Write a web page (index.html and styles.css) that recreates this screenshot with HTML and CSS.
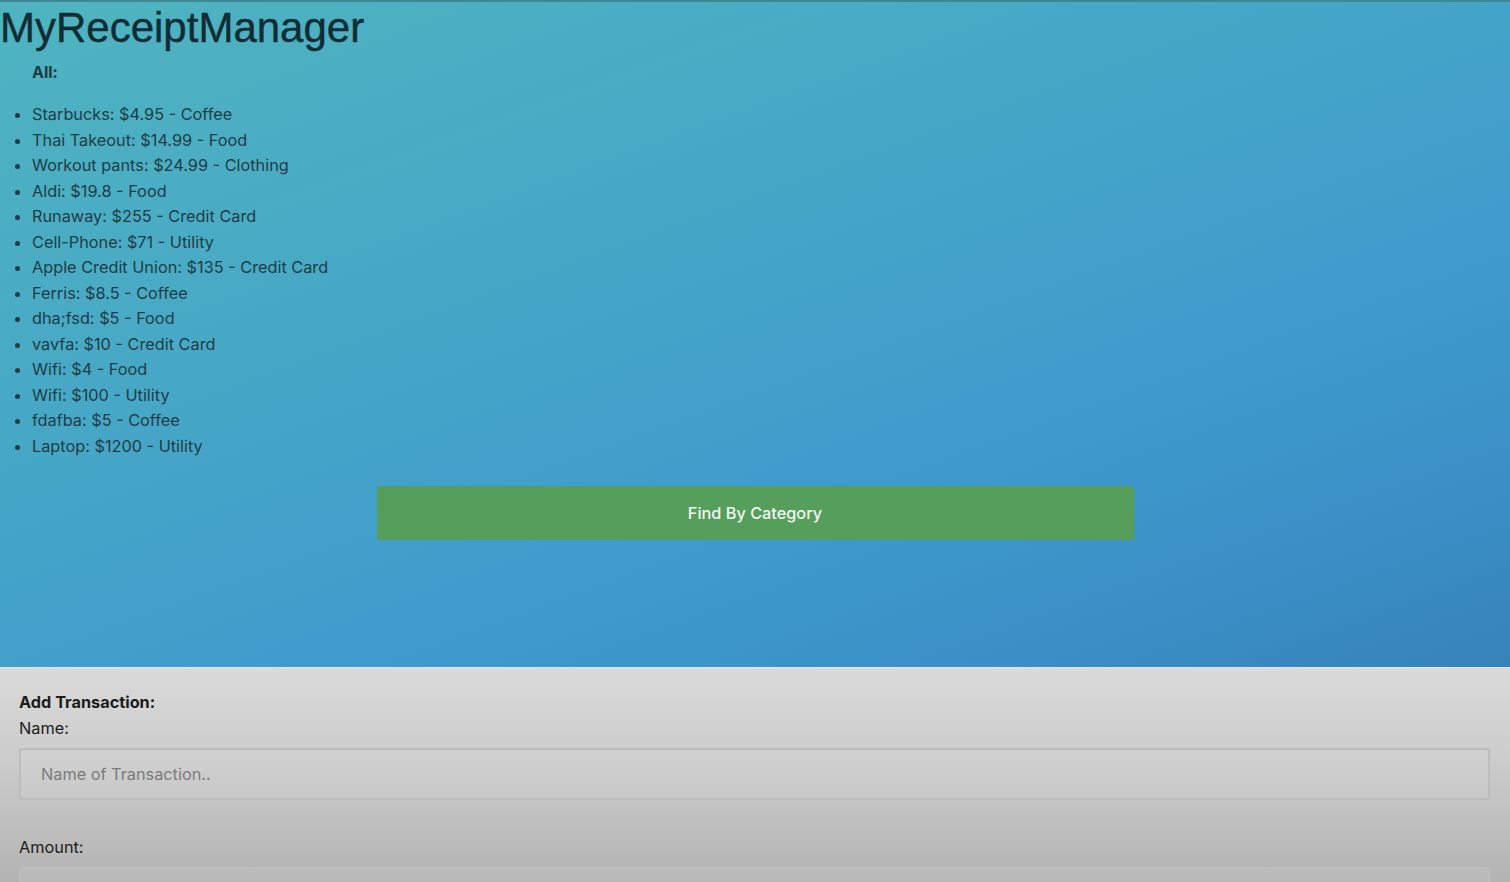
FILE: index.html
```html
<!DOCTYPE html>
<html>
<head>
<meta charset="utf-8">
<link rel="stylesheet" href="styles.css">
</head>
<body>
<div class="top">
  <h1 class="title">MyReceiptManager</h1>
  <div class="all">All:</div>
  <ul class="list">
    <li>Starbucks: $4.95 - Coffee</li>
    <li>Thai Takeout: $14.99 - Food</li>
    <li>Workout pants: $24.99 - Clothing</li>
    <li>Aldi: $19.8 - Food</li>
    <li>Runaway: $255 - Credit Card</li>
    <li>Cell-Phone: $71 - Utility</li>
    <li>Apple Credit Union: $135 - Credit Card</li>
    <li>Ferris: $8.5 - Coffee</li>
    <li>dha;fsd: $5 - Food</li>
    <li>vavfa: $10 - Credit Card</li>
    <li>Wifi: $4 - Food</li>
    <li>Wifi: $100 - Utility</li>
    <li>fdafba: $5 - Coffee</li>
    <li>Laptop: $1200 - Utility</li>
  </ul>
  <div class="btn-row">
    <button class="find-btn">Find By Category</button>
  </div>
</div>
<div class="add">
  <div class="add-title">Add Transaction:</div>
  <label class="lbl">Name:</label>
  <input class="field" type="text" placeholder="Name of Transaction..">
  <label class="lbl amount">Amount:</label>
  <input class="field" type="text">
</div>
</body>
</html>
```
FILE: styles.css
```css
html, body {
  margin: 0;
  padding: 0;
  height: 100%;
}
body {
  font-family: Inter, "Liberation Sans", sans-serif;
  color: #1f3a40;
  overflow: hidden;
  background: #b3b3b3;
}
.top {
  height: 667px;
  box-sizing: border-box;
  border-top: 2px solid #3f8592;
  background: linear-gradient(160deg, #4fb4c0 0%, #47a8c6 35%, #3f9bcd 65%, #3a8fc6 85%, #3683b8 100%);
  display: flex;
  flex-direction: column;
}
.top > * {
  flex-shrink: 0;
}
.title {
  margin: 2px 0 0 0;
  font-family: "Liberation Sans", Arial, sans-serif;
  font-weight: 400;
  font-size: 42px;
  line-height: 48px;
  color: #112c33;
  -webkit-text-stroke: 0.4px #112c33;
}
.all {
  margin: 8px 0 0 32px;
  font-weight: 700;
  font-size: 16px;
  line-height: 24px;
  color: #1f3a40;
}
.list {
  margin: 18px 0 0 0;
  padding-left: 32px;
  font-size: 16.3px;
  line-height: 25.5px;
  color: #1f3d45;
}
.btn-row {
  display: flex;
  justify-content: center;
  margin-top: 27px;
}
.find-btn {
  width: 757px;
  height: 54px;
  border: none;
  border-radius: 3px;
  background: #559e5c;
  color: #f4f7f2;
  font-family: Inter, "Liberation Sans", sans-serif;
  font-size: 16.3px;
  font-weight: 500;
}
.add {
  height: 215px;
  box-sizing: border-box;
  border-top: 1px solid #e4e6e6;
  background: linear-gradient(180deg, #dadada 0%, #cdcdcd 40%, #b3b3b3 100%);
  padding: 22px 20px 0 19px;
  display: flex;
  flex-direction: column;
  overflow: hidden;
}
.add > * {
  flex-shrink: 0;
}
.add-title {
  font-weight: 700;
  font-size: 16.3px;
  line-height: 24px;
  color: #1c1c1c;
}
.lbl {
  font-size: 16.3px;
  line-height: 24px;
  color: #1c1c1c;
  margin-top: 2px;
}
.lbl.amount {
  margin-top: 35px;
}
.field {
  margin-top: 8px;
  height: 52px;
  box-sizing: border-box;
  border: 2px solid #bdbdbd;
  border-radius: 4px;
  background: rgba(255, 255, 255, 0.08);
  padding: 0 20px;
  font-family: Inter, "Liberation Sans", sans-serif;
  font-size: 16.3px;
  color: #333;
}
.field::placeholder {
  color: #7b7b7b;
}
```
